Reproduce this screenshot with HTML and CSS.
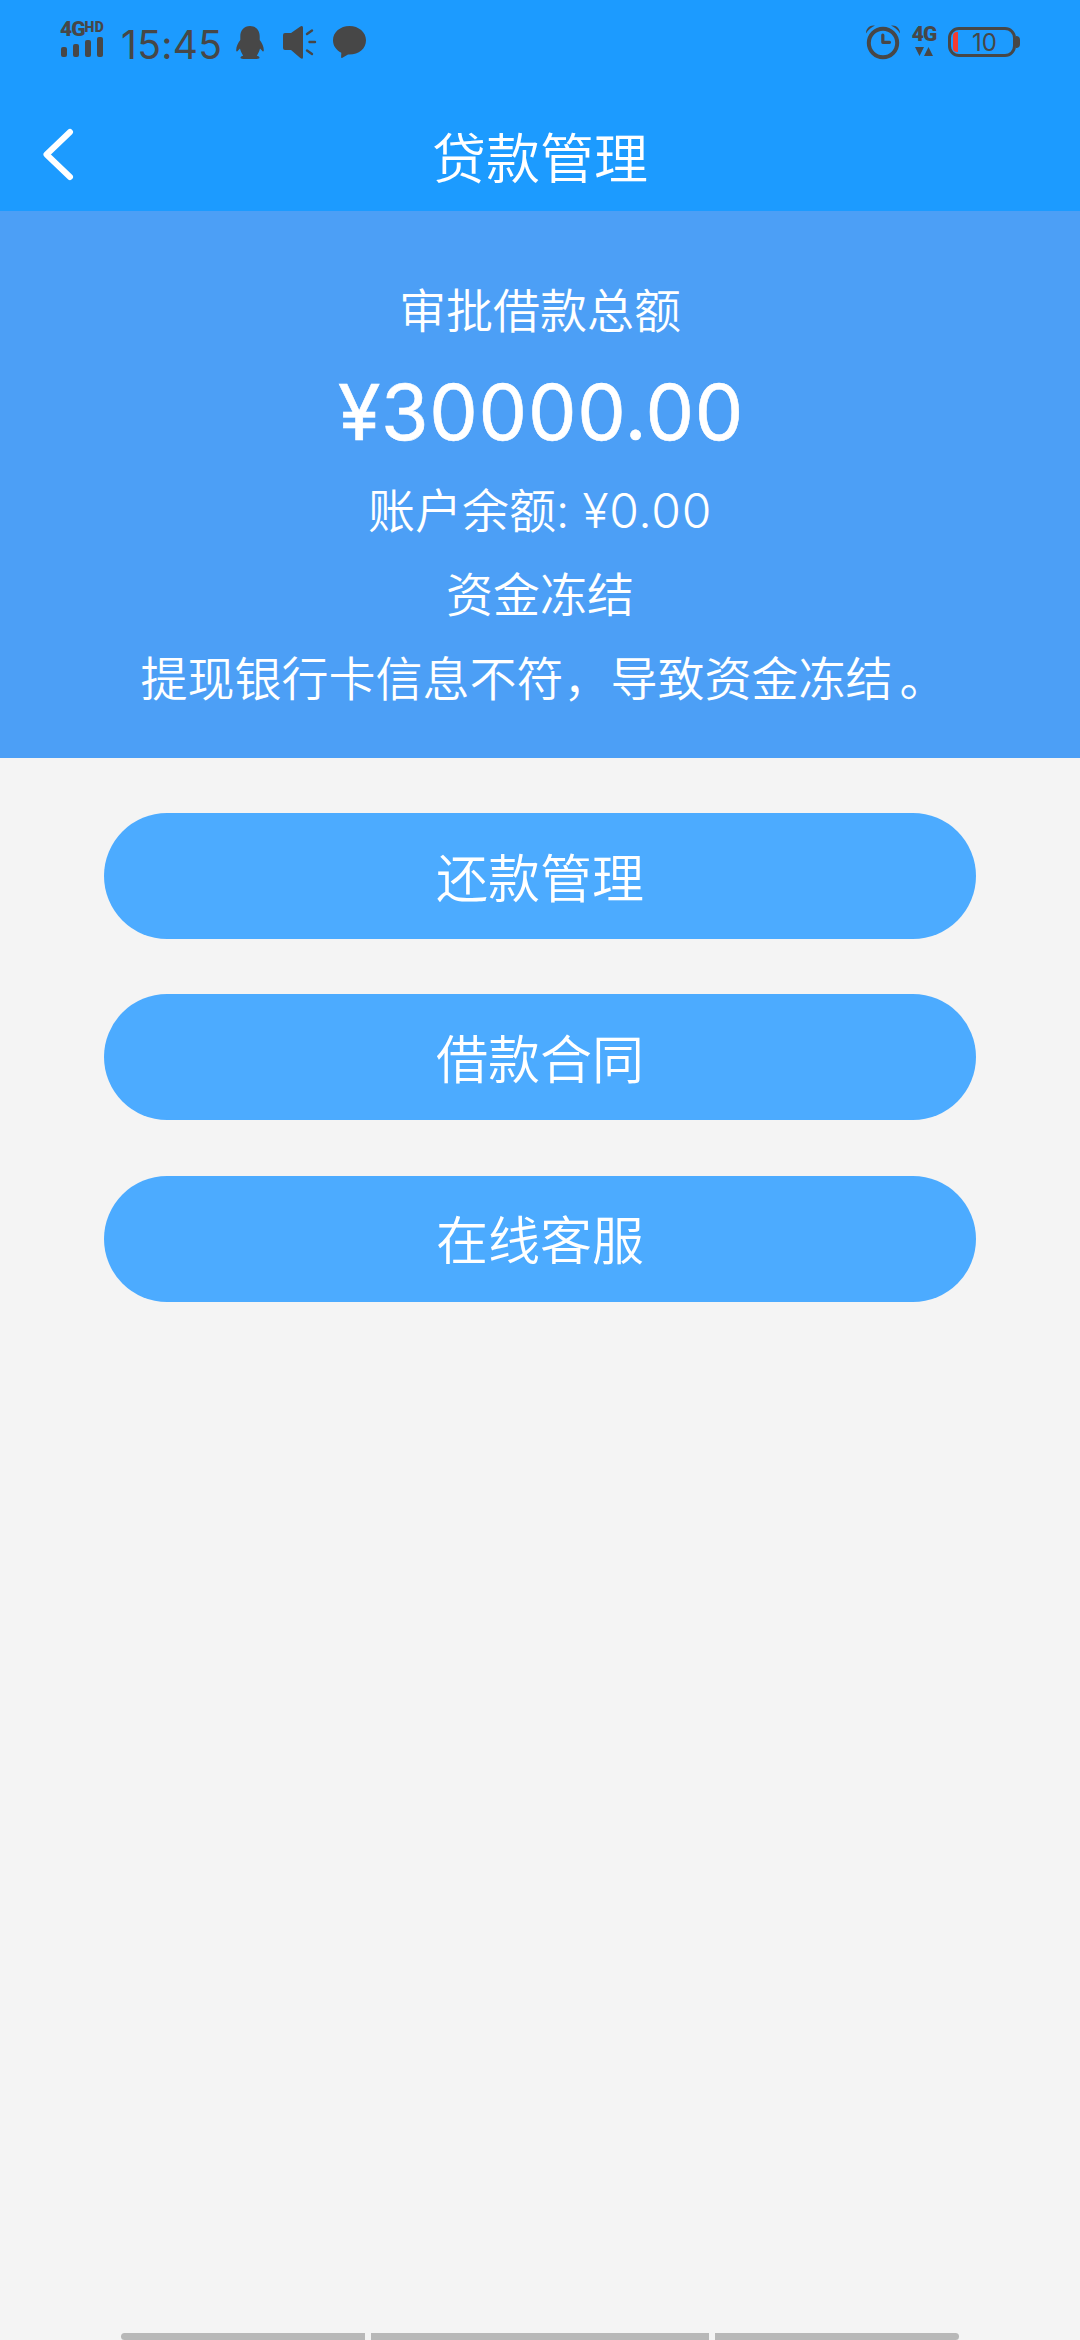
FILE: index.html
```html
<!DOCTYPE html>
<html lang="zh-CN">
<head>
<meta charset="utf-8">
<title>贷款管理</title>
<link rel="stylesheet" href="styles.css">
</head>
<body>
<div class="screen">
  <header class="header">
    <div class="status">
      <div class="status-left">
        <div class="signal">
          <div class="net"><span class="net-main">4G</span><span class="net-hd">HD</span></div>
          <svg class="bars" width="42" height="20" viewBox="0 0 42 20"><rect x="0" y="10" width="6" height="10" rx="2"/><rect x="12" y="7" width="6" height="13" rx="2"/><rect x="24" y="3" width="6" height="17" rx="2"/><rect x="36" y="0" width="6" height="20" rx="2"/></svg>
        </div>
        <span class="clock">15:45</span>
        <svg class="icon qq" width="28" height="33" viewBox="0 0 28 33"><path d="M14 0C8 0 4.300 4.300 4.300 10.500V14C2 17 .3 20 .2 24c0 1.600.6 1.800 1.400.9L4 22.500c.6 2.700 1.800 5 3.200 7.300-1.700.3-2.700.9-2.700 1.700 0 1 .8 1.400 2.800 1.400H20.700c2 0 2.800-.4 2.800-1.400 0-.8-1-1.400-2.700-1.700 1.400-2.300 2.600-4.600 3.200-7.300l2.400 2.400c.8.9 1.400.7 1.400-.9-.1-4-1.800-7-4.100-10v-3.500C23.700 4.300 20 0 14 0Z"/></svg>
        <svg class="icon speaker" width="33" height="33" viewBox="0 0 33 33"><path d="M2 7H8L17 .7C19 -.5 20 .2 20 2V31C20 33 19 33.300 17.300 32L8 24H2Q0 24 0 22V9Q0 7 2 7Z"/><path class="wave" d="M24 8L29 4.500M26.500 16H32M24 24.500L29 28"/></svg>
        <svg class="icon bubble" width="33" height="32" viewBox="0 0 33 32"><path d="M16.500 0C7.300 0 0 6.200 0 14.200c0 5.400 3.200 10 8.300 12.500L8.100 31.200c0 .8.6 1 1.300.6L15 28.500c10.500.5 18-5.700 18-14.300C33 6.200 25.700 0 16.500 0Z"/></svg>
      </div>
      <div class="status-right">
        <svg class="icon alarm" width="34" height="34" viewBox="0 0 34 34"><path d="M0 8.500C-.2 3 4.500-.5 9 .6Q3.500 3 0 8.500ZM34 8.500C34.200 3 29.500-.5 25 .6Q30.500 3 34 8.500Z"/><circle class="ring" cx="17" cy="18" r="14.200"/><path class="hands" d="M16.800 10V17.300H23.500"/></svg>
        <div class="data">
          <span class="net-main">4G</span>
          <svg width="18" height="9" viewBox="0 0 18 9"><path d="M0 0H9L4.500 9ZM9 9H18L13.500 0Z"/></svg>
        </div>
        <div class="battery"><span class="level"></span><span class="percent">10</span></div>
        <span class="battery-tip"></span>
      </div>
    </div>
    <div class="navbar">
      <svg class="back" width="32" height="54" viewBox="0 0 32 54"><path d="M28 5L4.500 27.500L28 50"/></svg>
      <h1 class="title">贷款管理</h1>
    </div>
  </header>
  <section class="summary">
    <p class="label">审批借款总额</p>
    <p class="amount">¥30000.00</p>
    <p class="line">账户余额: <span class="balance">¥0.00</span></p>
    <p class="line">资金冻结</p>
    <p class="line">提现银行卡信息不符，导致资金冻结<span class="stop">。</span></p>
  </section>
  <nav class="actions">
    <button class="action">还款管理</button>
    <button class="action">借款合同</button>
    <button class="action">在线客服</button>
  </nav>
  <footer class="gesture"><span class="pill first"></span><span class="pill middle"></span><span class="pill last"></span></footer>
</div>
</body>
</html>
```
FILE: styles.css
```css
* { box-sizing: border-box; }
body {
  margin: 0;
  font-family: Inter, "Noto Sans CJK SC", sans-serif;
  font-weight: 350;
  color: #fff;
  background: #f4f4f4;
}
h1, p { margin: 0; font-weight: inherit; }
svg { display: block; flex: none; }
.screen { width: 1080px; height: 2340px; display: flex; flex-direction: column; overflow: hidden; }

.header { height: 211px; background: #1c9bff; flex: none; }
.status {
  height: 84px;
  padding: 0 60px;
  display: flex;
  justify-content: space-between;
  align-items: flex-start;
  color: #474747;
}
.status svg { fill: #474747; }
.status-left, .status-right { display: flex; align-items: flex-start; }
.signal { width: 46px; padding-top: 22px; }
.net { display: flex; height: 15px; align-items: flex-start; }
.net-main { font-family: Roboto, sans-serif; font-size: 21px; line-height: 15px; font-weight: 900; letter-spacing: -1px; }
.net-hd { font-family: Roboto, sans-serif; font-size: 14px; line-height: 10px; font-weight: 900; letter-spacing: 0.5px; }
.bars { margin: 0 0 0 1px; }
.clock { margin-left: 15px; width: 103px; padding-top: 25px; font-size: 39px; line-height: 39px; font-weight: 400; letter-spacing: 0.3px; white-space: nowrap; }
.icon { margin-top: 26px; overflow: visible; }
.qq { margin-left: 12px; }
.speaker { margin-left: 19px; }
.bubble { margin-left: 17px; }
.wave { fill: none; stroke: #474747; stroke-width: 2.400; stroke-linecap: round; }
.alarm { margin-top: 25px; }
.ring { fill: none; stroke: #474747; stroke-width: 4; }
.hands { fill: none; stroke: #474747; stroke-width: 3.200; stroke-linecap: round; stroke-linejoin: round; }
.data { width: 24px; margin: 27px 12px 0; display: flex; flex-direction: column; align-items: center; gap: 5px; }
.battery {
  width: 68px;
  height: 30px;
  margin-top: 27px;
  padding-left: 2px;
  border: 3px solid #474747;
  border-radius: 11px;
  display: flex;
  align-items: center;
}
.level { width: 5px; height: 20px; background: #f43c30; border-radius: 4px 0 0 4px; }
.percent { flex: 1; padding: 2px 2px 0 0; text-align: center; font-size: 24px; line-height: 24px; font-weight: 400; }
.battery-tip { width: 4px; height: 12px; margin-top: 36px; background: #474747; border-radius: 0 4px 4px 0; }

.navbar { height: 127px; padding-left: 42px; display: grid; grid-template-columns: 32px 932px; align-items: start; }
.back { margin-top: 43px; }
.back path { fill: none; stroke: #fff; stroke-width: 6; stroke-linecap: round; stroke-linejoin: round; }
.title { margin-top: 36px; font-size: 54px; line-height: 80px; text-align: center; }

.summary { height: 547px; padding-top: 58px; background: #4c9ff6; text-align: center; font-size: 47px; flex: none; }
.label { line-height: 84px; }
.amount {
  height: 116px;
  padding-left: 2px;
  font-size: 77px;
  line-height: 118px;
  font-weight: 400;
  letter-spacing: 0.7px;
  -webkit-text-stroke: 0.6px #fff;
}
.line { line-height: 84px; white-space: nowrap; }
.balance { font-size: 48px; letter-spacing: 0.7px; }
.stop { margin: 0 -7px 0 7px; }

.actions { padding: 55px 104px 0; display: flex; flex-direction: column; gap: 55.400px; }
.action {
  height: 126px;
  padding: 7px 0 0;
  border: 0;
  border-radius: 63px;
  background: #4cabff;
  color: #fff;
  font: inherit;
  font-size: 52px;
  line-height: 76px;
}

.gesture { margin-top: auto; padding: 0 121px; display: grid; grid-template-columns: 244px 338px 244px; gap: 6px; }
.pill { height: 7px; background: #b8b8b8; }
.first { border-radius: 4px 0 0 4px; }
.last { border-radius: 0 4px 4px 0; }
```
